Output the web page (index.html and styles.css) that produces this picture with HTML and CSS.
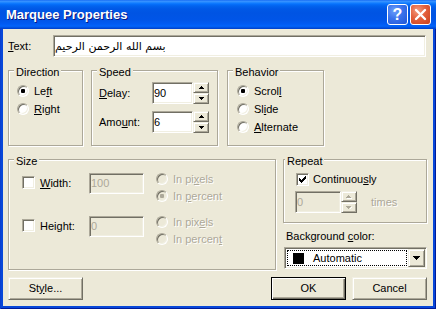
FILE: index.html
```html
<!DOCTYPE html>
<html lang="en">
<head>
<meta charset="utf-8">
<title>Marquee Properties</title>
<link rel="stylesheet" href="styles.css">
</head>
<body>
<div class="window">
  <div class="titlebar">
    <span class="title">Marquee Properties</span>
    <div class="tbtns">
      <span class="tbtn help">?</span>
      <span class="tbtn close"><svg width="19" height="19" viewBox="0 0 19 19"><path d="M5 5L14 14M14 5L5 14" stroke="#fff" stroke-width="2.4" stroke-linecap="round"/></svg></span>
    </div>
  </div>
  <div class="client">
    <div class="row-text">
      <span class="lbl-text"><u>T</u>ext:</span>
      <div class="edit edit-text"><span class="arabic">بسم الله الرحمن الرحيم</span></div>
    </div>

    <div class="row-groups">
      <div class="group g-dir">
        <div class="legend">Direction</div>
        <div class="gbody opts">
          <div class="opt"><span class="radio on"></span><span>Le<u>f</u>t</span></div>
          <div class="opt"><span class="radio"></span><span><u>R</u>ight</span></div>
        </div>
      </div>
      <div class="group g-speed">
        <div class="legend">Speed</div>
        <div class="gbody speed">
          <div class="srow">
            <span class="slbl"><u>D</u>elay:</span>
            <div class="edit num">90</div>
            <div class="spin">
              <span class="sbtn"><svg width="5" height="3" viewBox="0 0 5 3"><path d="M2 0h1v1h1v1h1v1H0V2h1V1h1z" fill="#000"/></svg></span>
              <span class="sbtn"><svg width="5" height="3" viewBox="0 0 5 3"><path d="M0 0h5v1H4v1H3v1H2V2H1V1H0z" fill="#000"/></svg></span>
            </div>
          </div>
          <div class="srow">
            <span class="slbl">Amo<u>u</u>nt:</span>
            <div class="edit num">6</div>
            <div class="spin">
              <span class="sbtn"><svg width="5" height="3" viewBox="0 0 5 3"><path d="M2 0h1v1h1v1h1v1H0V2h1V1h1z" fill="#000"/></svg></span>
              <span class="sbtn"><svg width="5" height="3" viewBox="0 0 5 3"><path d="M0 0h5v1H4v1H3v1H2V2H1V1H0z" fill="#000"/></svg></span>
            </div>
          </div>
        </div>
      </div>
      <div class="group g-beh">
        <div class="legend">Behavior</div>
        <div class="gbody opts beh">
          <div class="opt"><span class="radio on"></span><span>Scrol<u>l</u></span></div>
          <div class="opt"><span class="radio"></span><span>Sl<u>i</u>de</span></div>
          <div class="opt"><span class="radio"></span><span><u>A</u>lternate</span></div>
        </div>
      </div>
    </div>

    <div class="row-lower">
      <div class="group g-size">
        <div class="legend">Size</div>
        <div class="gbody size">
          <div class="zrow">
            <div class="zcheck"><span class="check"></span><span class="zlbl"><u>W</u>idth:</span></div>
            <div class="edit num dis-edit zin">100</div>
            <div class="zradios">
              <div class="zopt dis"><span class="radio off"></span><span>In pi<u>x</u>els</span></div>
              <div class="zopt dis"><span class="radio off on"></span><span>In <u>p</u>ercent</span></div>
            </div>
          </div>
          <div class="zrow">
            <div class="zcheck"><span class="check"></span><span class="zlbl">Hei<u>g</u>ht:</span></div>
            <div class="edit num dis-edit zin">0</div>
            <div class="zradios">
              <div class="zopt dis"><span class="radio off"></span><span>In pix<u>e</u>ls</span></div>
              <div class="zopt dis"><span class="radio off"></span><span>In percen<u>t</u></span></div>
            </div>
          </div>
        </div>
      </div>

      <div class="right-col">
        <div class="group g-rep">
          <div class="legend">Repeat</div>
          <div class="gbody rep">
            <div class="crow">
              <span class="check checked"><svg width="11" height="11" viewBox="1 1 11 11"><path d="M3 5h1v1h1v1h1V6h1V5h1V4h1V3h1v3H9v1H8v1H7v1H6v1H5V9H4V8H3z" fill="#000"/></svg></span>
              <span class="clbl">Continuou<u>s</u>ly</span>
            </div>
            <div class="trow">
              <div class="edit num dis-edit tin">0</div>
              <div class="spin">
                <span class="sbtn"><svg width="6" height="4" viewBox="0 0 6 4"><path d="M2 0h1v1h1v1h1v1H0V2h1V1h1z" fill="#aca899"/><path d="M5 3h1v1H1V3z" fill="#fff"/></svg></span>
                <span class="sbtn"><svg width="6" height="4" viewBox="0 0 6 4"><path d="M0 0h5v1H4v1H3v1H2V2H1V1H0z" fill="#aca899"/><path d="M5 1h1v1H5v1H4V2h1z" fill="#fff"/></svg></span>
              </div>
              <span class="times dis">times</span>
            </div>
          </div>
        </div>
        <div class="bglbl">Background <u>c</u>olor:</div>
        <div class="combo">
          <div class="cfield"><div class="focus"><span class="swatch"></span><span class="ctext">Automatic</span></div></div>
          <span class="cbtn"><svg width="7" height="4" viewBox="0 0 7 4"><path d="M0 0h7v1H6v1H5v1H4v1H3V3H2V2H1V1H0z" fill="#000"/></svg></span>
        </div>
      </div>
    </div>

    <div class="row-btns">
      <span class="btn">St<u>y</u>le...</span>
      <span class="btn default push">OK</span>
      <span class="btn cancel">Cancel</span>
    </div>
  </div>
</div>
</body>
</html>
```

FILE: styles.css
```css
* { box-sizing: border-box; }
html, body { margin: 0; padding: 0; background: #fff; }
body {
  font-family: "Liberation Sans", Arial, sans-serif;
  font-size: 11px;
  line-height: 13px;
  color: #000;
}
u { text-decoration: underline; text-underline-offset: 1px; }

.window {
  width: 436px;
  height: 309px;
  display: flex;
  flex-direction: column;
  background: #0747d9;
  box-shadow: inset 1px 0 0 #0a3fcf, inset -1px -1px 0 #001b99;
}

.titlebar {
  height: 29px;
  flex: none;
  display: flex;
  align-items: center;
  padding: 0 5px 0 6px;
  background: linear-gradient(to bottom,
    #0a5ff0 0px, #3d95ff 1px, #2b8cff 2px, #1580ff 3px, #0671fc 4px,
    #0263ee 6px, #0058e6 9px, #0054e3 13px, #0055e7 20px, #005bf3 24px,
    #0263fa 26px, #005ced 27px, #0049d8 28px, #003fc9 29px);
}
.title {
  font-weight: bold;
  font-size: 13px;
  line-height: 13px;
  color: #fff;
  text-shadow: 1px 1px 0 #0a1883;
}
.tbtns { margin-left: auto; display: flex; gap: 2px; }
.tbtn {
  width: 21px;
  height: 21px;
  border: 1px solid #fff;
  border-radius: 3px;
  display: flex;
  align-items: center;
  justify-content: center;
}
.help {
  background: radial-gradient(circle at 35% 30%, #6c9ffa 0, #3a72ec 45%, #1f55d6 100%);
  color: #fff;
  font-weight: bold;
  font-size: 16px;
  line-height: 16px;
}
.close {
  background: radial-gradient(circle at 35% 30%, #f39b7e 0, #e3603c 45%, #c9401c 100%);
}

.client {
  flex: 1;
  margin: 0 3px 3px;
  background: #ece9d8;
  padding: 6px 6px 0 5px;
  display: flex;
  flex-direction: column;
}

/* classic 3D styles */
.edit {
  background: #fff;
  border: 1px solid;
  border-color: #aca899 #fff #fff #aca899;
  box-shadow: inset 1px 1px 0 #716f64, inset -1px -1px 0 #f1efe2;
  display: flex;
  align-items: center;
  padding: 0 1px;
  white-space: nowrap;
  overflow: hidden;
}
.dis-edit { background: #ece9d8; color: #aca899; }
.sbtn, .cbtn, .btn {
  background: #ece9d8;
  border: 1px solid;
  border-color: #f1efe2 #716f64 #716f64 #f1efe2;
  box-shadow: inset 1px 1px 0 #fff, inset -1px -1px 0 #aca899;
  display: flex;
  align-items: center;
  justify-content: center;
}
.radio {
  width: 12px;
  height: 12px;
  flex: none;
  border-radius: 50%;
  border: 1px solid;
  border-color: #aca899 #fff #fff #aca899;
  box-shadow: inset 1px 1px 0 #716f64, inset -1px -1px 0 #f1efe2;
  background: #fff;
  display: flex;
  align-items: center;
  justify-content: center;
}
.radio.on::after {
  content: "";
  width: 4px;
  height: 4px;
  border-radius: 1px;
  background: #000;
}
.radio.off { background: #ece9d8; }
.radio.off.on::after { background: #aca899; }
.check {
  width: 13px;
  height: 13px;
  flex: none;
  border: 1px solid;
  border-color: #aca899 #fff #fff #aca899;
  box-shadow: inset 1px 1px 0 #716f64, inset -1px -1px 0 #f1efe2;
  background: #fff;
}
.check svg { display: block; }
.dis { color: #aca899; text-shadow: 1px 1px 0 #fff; }

/* group boxes */
.group {
  border: 1px solid #aca899;
  box-shadow: inset 1px 1px 0 #fff, 1px 1px 0 #fff;
  flex: none;
}
.legend {
  margin: -5px 0 0 5px;
  padding: 0 2px;
  width: max-content;
  background: #ece9d8;
  line-height: 13px;
}

/* row: text */
.row-text { display: flex; align-items: center; height: 22px; }
.lbl-text { width: 45px; }
.edit-text { width: 373px; height: 22px; }
.arabic { font-family: "DejaVu Sans", sans-serif; font-size: 11px; }

/* row: groups */
.row-groups { display: flex; margin-top: 13px; height: 76px; }
.g-dir { width: 75px; }
.g-speed { width: 127px; margin-left: 8px; }
.g-beh { width: 97px; margin-left: 9px; }
.opts { padding: 3px 0 0 8px; }
.opts.beh { padding-left: 9px; }
.opt { display: flex; align-items: center; height: 18px; }
.opt .radio { margin-right: 5px; }

.speed { padding: 3px 0 0 7px; display: flex; flex-direction: column; gap: 7px; }
.srow { display: flex; align-items: center; height: 22px; }
.slbl { width: 53px; }
.num { width: 41px; height: 22px; }
.spin { display: flex; flex-direction: column; width: 16px; height: 22px; flex: none; }
.sbtn { flex: 1; }
.sbtn svg { display: block; }

/* row: size / repeat */
.row-lower { display: flex; align-items: flex-start; margin-top: 13px; }
.g-size { width: 268px; height: 111px; }
.size { padding: 5px 0 0 13px; }
.zrow { display: flex; align-items: flex-start; height: 34px; }
.zrow + .zrow { margin-top: 9px; }
.zcheck { display: flex; align-items: flex-start; width: 67px; }
.zcheck .check { margin-top: 3px; }
.zlbl { margin-left: 5px; line-height: 21px; }
.zin { width: 55px; height: 21px; }
.zradios { margin-left: 12px; }
.zopt { display: flex; align-items: flex-start; height: 17px; }
.zopt .radio { margin-right: 5px; }

.right-col { margin-left: 7px; width: 144px; display: flex; flex-direction: column; }
.g-rep { width: 144px; height: 64px; }
.g-rep .legend { margin-left: 1px; }
.rep { padding: 5px 0 0 12px; }
.crow { display: flex; align-items: center; height: 13px; }
.clbl { margin-left: 4px; }
.trow { display: flex; align-items: center; margin: 5px 0 0 -1px; height: 22px; }
.tin { width: 46px; height: 22px; }
.times { margin-left: 14px; }

.bglbl { margin: 7px 0 0 3px; }
.combo {
  margin: 4px 0 0 1px;
  width: 143px;
  height: 22px;
  background: #fff;
  border: 1px solid;
  border-color: #aca899 #fff #fff #aca899;
  box-shadow: inset 1px 1px 0 #716f64, inset -1px -1px 0 #f1efe2;
  padding: 1px;
  display: flex;
}
.cfield { flex: 1; padding: 1px; }
.focus {
  height: 100%;
  border: 1px dotted #000;
  display: flex;
  align-items: center;
}
.swatch { width: 11px; height: 11px; margin-left: 5px; background: #000; }
.ctext { margin-left: 9px; }
.cbtn { width: 17px; flex: none; }
.cbtn svg { display: block; }

/* buttons */
.row-btns { display: flex; margin-top: 7px; height: 23px; }
.btn { width: 75px; height: 23px; }
.btn.push { margin-left: auto; }
.btn.default {
  border: 1px solid #000;
  box-shadow: inset 1px 1px 0 #fff, inset -1px -1px 0 #716f64, inset -2px -2px 0 #aca899;
}
.btn.cancel { margin-left: 6px; }
```
